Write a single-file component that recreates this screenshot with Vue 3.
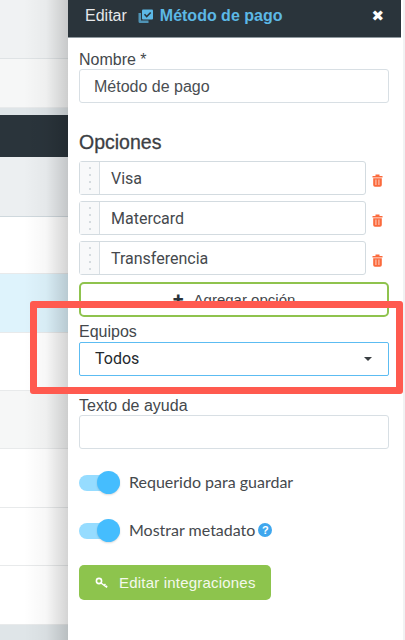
<template>
  <div class="screen">
    <!-- table behind the drawer -->
    <div class="table-bg">
      <div
        v-for="row in rows"
        :key="row.key"
        class="bg-row"
        :class="row.cls"
        :style="{ height: row.h + 'px' }"
      ></div>
    </div>

    <aside class="drawer">
      <header class="drawer-head">
        <span class="head-edit">Editar</span>
        <svg class="head-icon" width="15" height="14" viewBox="0 0 15 14">
          <path d="M0.500 4h2.500v7.500h7.500V14H2A1.500 1.500 0 0 1 0.500 12.500z" fill="#4f93b5" />
          <rect x="4" y="0.500" width="11" height="10" rx="1" fill="#5cb8e6" />
          <path d="M6.500 5.300l2.200 2.200 4-4" fill="none" stroke="#2a343b" stroke-width="1.600" />
        </svg>
        <span class="head-title">Método de pago</span>
        <span class="head-close">✖</span>
      </header>

      <div class="drawer-body">
        <label class="label-text name-label">Nombre *</label>
        <div class="form-input name-input">Método de pago</div>

        <h3 class="section-title">Opciones</h3>

        <div class="options">
          <div v-for="opt in options" :key="opt" class="option-row">
            <div class="option-box">
              <span class="grip">
                <i v-for="n in 4" :key="n"></i>
              </span>
              <span class="option-text">{{ opt }}</span>
            </div>
            <svg class="trash" width="11" height="13" viewBox="0 0 11 13">
              <path d="M3.500 2V.5h4V2h3v1.500H.500V2z" fill="#fb6a3c" />
              <path
                d="M1.200 4.200h8.600V11a1.800 1.800 0 0 1-1.800 1.800H3A1.800 1.800 0 0 1 1.200 11zM3.600 5.500v5.500h.7V5.500zm3 0v5.500h.7V5.500z"
                fill="#fb6a3c"
                fill-rule="evenodd"
              />
            </svg>
          </div>
        </div>

        <div class="add-option">
          <span class="add-plus">✚</span>
          <span>Agregar opción</span>
        </div>

        <label class="label-text team-label">Equipos</label>
        <div class="form-input team-select">
          <span>Todos</span>
          <span class="caret"></span>
        </div>

        <label class="label-text help-label">Texto de ayuda</label>
        <div class="form-input help-input"></div>

        <div class="toggle-row first">
          <span class="toggle"><span class="knob"></span></span>
          <span class="toggle-text">Requerido para guardar</span>
        </div>
        <div class="toggle-row">
          <span class="toggle"><span class="knob"></span></span>
          <span class="toggle-text">Mostrar metadato</span>
          <span class="help-dot">?</span>
        </div>

        <button class="btn-green">
          <svg width="14" height="12" viewBox="0 0 14 12">
            <circle cx="4" cy="4" r="2.600" fill="none" stroke="#fff" stroke-width="1.600" />
            <path d="M6 6l6 4.500M9 8.300l1.500-1.300M11 9.800l1.200-1" stroke="#fff" stroke-width="1.500" fill="none" />
          </svg>
          Editar integraciones
        </button>
      </div>
    </aside>

    <div class="right-edge"></div>

    <!-- red annotation box over the screenshot -->
    <div class="highlight"></div>
  </div>
</template>

<script setup>
const options = ['Visa', 'Matercard', 'Transferencia']

const rows = [
  { key: 'a', h: 59, cls: 'top' },
  { key: 'b', h: 49, cls: 'grey' },
  { key: 'c', h: 7, cls: 'gap' },
  { key: 'd', h: 42, cls: 'dark' },
  { key: 'e', h: 60, cls: 'head-row' },
  { key: 'f', h: 57, cls: 'white' },
  { key: 'g', h: 59, cls: 'blue' },
  { key: 'h', h: 58, cls: 'white' },
  { key: 'i', h: 58, cls: 'grey' },
  { key: 'j', h: 59, cls: 'white' },
  { key: 'k', h: 58, cls: 'white' },
  { key: 'l', h: 59, cls: 'white' },
  { key: 'm', h: 15, cls: 'gap' }
]
</script>

<style>
html,
body {
  margin: 0;
  background: #fff;
}
</style>

<style scoped>
.screen {
  position: relative;
  width: 405px;
  height: 640px;
  overflow: hidden;
  font-family: "Liberation Sans", Arial, sans-serif;
  color: #3f4448;
}

/* background table */
.table-bg {
  width: 68px;
  height: 640px;
  position: absolute;
  left: 0;
  top: 0;
}
.table-bg::after {
  content: "";
  position: absolute;
  top: 0;
  right: 0;
  width: 44px;
  height: 100%;
  background: linear-gradient(to right, rgba(0, 0, 0, 0), rgba(0, 0, 0, 0.03) 50%, rgba(0, 0, 0, 0.17));
}
.bg-row {
  border-bottom: 1px solid #e8eaeb;
  box-sizing: border-box;
}
.top { background: #f0f2f3; border-bottom-color: #dfe3e5; }
.grey { background: #f6f7f7; }
.head-row { background: #eceff1; border-bottom-color: #cfd8dd; }
.white { background: #fff; }
.blue { background: #def3fc; }
.gap { background: #dfe5e8; border-bottom: none; }
.dark { background: #2a343b; border-bottom: none; }

/* drawer */
.drawer {
  position: absolute;
  left: 68px;
  top: 0;
  width: 333px;
  height: 640px;
  background: #fff;
  box-sizing: border-box;
}
.drawer-head {
  height: 38px;
  background: #2a343b;
  border-bottom: 1px solid #8f999f;
  box-sizing: border-box;
  display: flex;
  align-items: center;
  padding: 0 17px 5px 17px;
}
.head-edit {
  color: #e6e8ea;
  font-size: 16px;
  margin-right: 11px;
}
.head-icon {
  margin-right: 7px;
}
.head-title {
  color: #5cb8e6;
  font-size: 16px;
  font-weight: 700;
}
.head-close {
  margin-left: auto;
  color: #fff;
  font-size: 15px;
  font-family: "DejaVu Sans", sans-serif;
}

.drawer-body {
  padding: 13px 12px 0 11px;
  display: flex;
  flex-direction: column;
  align-items: flex-start;
}
.label-text {
  font-size: 16px;
  line-height: 17px;
  color: #44484c;
}
.form-input {
  width: 310px;
  height: 34px;
  box-sizing: border-box;
  border: 1px solid #d8dfe4;
  border-radius: 3px;
  background: #fff;
  font-size: 16px;
  line-height: 34px;
  padding: 0 14px;
  color: #4a4e52;
}
.name-input {
  margin-top: 1px;
}
.section-title {
  margin: 27px 0 0;
  font-size: 19.500px;
  line-height: 24px;
  font-weight: 400;
  -webkit-text-stroke: 0.3px #3c4044;
  color: #3c4044;
}

.options {
  margin-top: 7px;
  display: flex;
  flex-direction: column;
  gap: 6px;
}
.option-row {
  display: flex;
  align-items: center;
}
.option-box {
  width: 287px;
  height: 34px;
  box-sizing: border-box;
  border: 1px solid #d3dbe0;
  border-radius: 3px;
  display: flex;
  align-items: center;
}
.grip {
  width: 19px;
  height: 100%;
  background: #f8f9fa;
  border-right: 1px solid #d8dfe4;
  display: flex;
  flex-direction: column;
  align-items: center;
  justify-content: center;
  gap: 5px;
  flex: none;
}
.grip i {
  display: block;
  width: 2px;
  height: 2px;
  background: #d5dbdf;
}
.option-text {
  padding-left: 11px;
  font-family: Roboto, sans-serif;
  font-size: 16px;
  color: #45494d;
}
.trash {
  margin-left: 6px;
  margin-top: 5px;
}

.add-option {
  margin-top: 7px;
  width: 310px;
  height: 35px;
  box-sizing: border-box;
  border: 2px solid #8fc34e;
  border-radius: 5px;
  display: flex;
  align-items: center;
  justify-content: center;
  gap: 10px;
  font-size: 15px;
  color: #44484c;
}
.add-plus {
  font-size: 13px;
  color: #2a343b;
  font-family: "DejaVu Sans", sans-serif;
}
.team-label {
  margin-top: 6px;
}
.team-select {
  margin-top: 2px;
  border-color: #5cbcf2;
  border-radius: 2px;
  font-family: Roboto, sans-serif;
  color: #24292d;
  font-weight: 400;
  display: flex;
  align-items: center;
  justify-content: space-between;
  padding-right: 16px;
  padding-left: 15px;
}
.caret {
  width: 0;
  height: 0;
  border-left: 4.500px solid transparent;
  border-right: 4.500px solid transparent;
  border-top: 4.500px solid #3a3f43;
}
.help-label {
  margin-top: 21px;
}
.help-input {
  margin-top: 1px;
}

.toggle-row {
  display: flex;
  align-items: center;
  height: 24px;
  margin-top: 24px;
}
.toggle-row.first {
  margin-top: 22px;
}
.toggle {
  position: relative;
  display: block;
  width: 41px;
  height: 16px;
  border-radius: 8px;
  background: #96dcff;
}
.knob {
  position: absolute;
  right: 0;
  top: -4px;
  width: 23px;
  height: 23px;
  border-radius: 50%;
  background: #45bdfe;
  box-shadow: 0 1px 2px rgba(0, 0, 0, 0.15);
}
.toggle-text {
  margin-left: 9px;
  font-family: Lato, sans-serif;
  font-size: 16px;
  line-height: 22px;
  margin-top: -2px;
  color: #45494d;
}
.help-dot {
  margin-left: 3px;
  margin-top: -2px;
  width: 14px;
  height: 14px;
  border-radius: 50%;
  background: #3fa7ee;
  color: #fff;
  font-size: 11px;
  font-weight: 700;
  line-height: 14px;
  text-align: center;
}

.btn-green {
  margin-top: 22px;
  width: 192px;
  height: 35px;
  border: none;
  border-radius: 5px;
  background: #8dc44d;
  color: #f4f9ec;
  font-family: "Liberation Sans", Arial, sans-serif;
  font-size: 15px;
  letter-spacing: 0.2px;
  display: flex;
  align-items: center;
  gap: 10px;
  padding: 0 0 0 16px;
}

.right-edge {
  position: absolute;
  right: 0;
  top: 0;
  width: 2px;
  height: 640px;
  background: #f1f2f3;
}

/* annotation */
.highlight {
  position: absolute;
  left: 30px;
  top: 301px;
  width: 373px;
  height: 93px;
  box-sizing: border-box;
  border: 7px solid #ff5a4f;
  border-radius: 3px;
}
</style>
